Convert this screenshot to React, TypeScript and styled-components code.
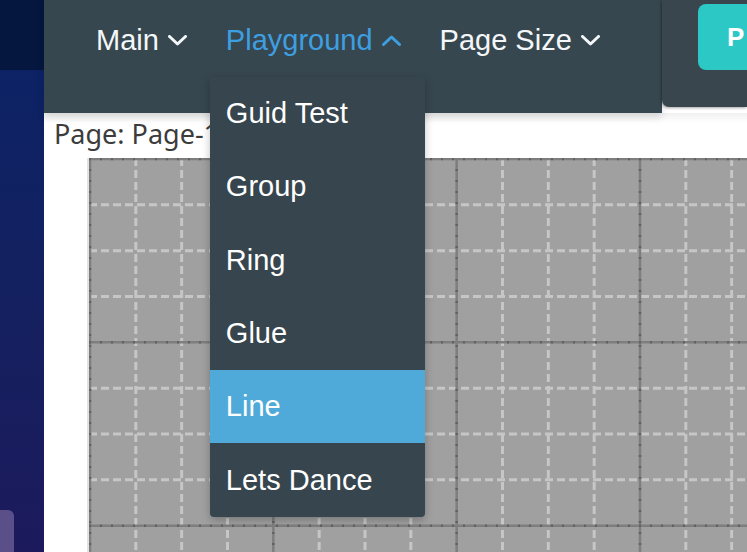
import React from "react";
import styled, { createGlobalStyle } from "styled-components";

const Global = createGlobalStyle`
  html, body { margin: 0; padding: 0; overflow: hidden; }
  body { width: 747px; height: 552px; background: #ffffff; font-family: "Liberation Sans", Arial, sans-serif; }
  #root { height: 100%; }
`;

const Shell = styled.div`
  display: flex;
  width: 747px;
  height: 552px;
  overflow: hidden;
`;

const Sidebar = styled.aside`
  flex: 0 0 44px;
  display: flex;
  flex-direction: column;
  background: linear-gradient(180deg, #0a2366 0%, #14205f 55%, #1c1a5d 100%);
`;

const SidebarTop = styled.div`
  height: 70px;
  background: #05163f;
`;

const SidebarSpacer = styled.div`
  flex: 1;
`;

const SidebarChip = styled.div`
  width: 14px;
  height: 42px;
  background: #5a4f88;
  border-top-right-radius: 6px;
`;

const Main = styled.div`
  flex: 1;
  display: flex;
  flex-direction: column;
  min-width: 0;
  position: relative;
`;

const Header = styled.header`
  display: flex;
  align-items: flex-start;
  height: 113px;
  background: #ffffff;
  position: relative;
  z-index: 2;
`;

const NavBar = styled.nav`
  flex: 0 0 618px;
  height: 113px;
  box-sizing: border-box;
  background: #37474f;
  display: flex;
  align-items: flex-start;
  padding-left: 32px;
  box-shadow: 0 4px 8px rgba(0, 0, 0, 0.12);
`;

const NavItem = styled.div<{ $active?: boolean }>`
  position: relative;
  display: flex;
  align-items: center;
  height: 80px;
  padding: 0 19px 0 20px;
  font-size: 29px;
  color: ${(p) => (p.$active ? "#3d9fe2" : "#f4f7f9")};
  white-space: nowrap;
  cursor: pointer;
`;

const Chevron = styled.svg`
  margin-left: 9px;
  width: 19px;
  height: 11px;
  flex: none;
`;

const ActionPanel = styled.div`
  flex: 1;
  height: 107px;
  background: #39464e;
  border-bottom-left-radius: 7px;
  box-shadow: -1px 1px 3px rgba(0, 0, 0, 0.35);
  display: flex;
  align-items: flex-start;
  padding-left: 36px;
  overflow: hidden;
`;

const TealButton = styled.button`
  margin-top: 4px;
  height: 66px;
  min-width: 120px;
  border: none;
  border-radius: 8px;
  background: #2cc8c6;
  color: #ffffff;
  font-family: "Liberation Sans", Arial, sans-serif;
  font-weight: 700;
  font-size: 26px;
  letter-spacing: 2px;
  text-align: left;
  padding: 0 0 0 29px;
`;

const Dropdown = styled.ul`
  position: absolute;
  top: 77px;
  left: 4px;
  width: 215px;
  margin: 0;
  padding: 0;
  list-style: none;
  background: #37464e;
  border-radius: 0 0 4px 4px;
  box-shadow: 0 3px 8px rgba(0, 0, 0, 0.25);
  overflow: hidden;
  z-index: 5;
`;

const DropItem = styled.li<{ $selected?: boolean }>`
  height: 73.3px;
  display: flex;
  align-items: center;
  padding-left: 16px;
  font-size: 29px;
  color: #ffffff;
  background: ${(p) => (p.$selected ? "#50aad9" : "transparent")};
`;

const Content = styled.section`
  flex: 1;
  background: linear-gradient(180deg, #f0f0f0 0px, #ffffff 10px, #ffffff 100%);
  display: flex;
  flex-direction: column;
  padding-top: 6px;
  min-height: 0;
`;

const PageLabel = styled.div`
  padding-left: 10px;
  height: 39px;
  font-family: "Noto Sans", "Open Sans", sans-serif;
  font-size: 27px;
  line-height: 30px;
  color: #3c3c3c;
  white-space: nowrap;
`;

const CanvasWrap = styled.div`
  flex: 1;
  margin-left: 43px;
  border-left: 2px solid #e2e2e2;
  overflow: hidden;
`;

const chevronDown = "M1.5 1.5 L9.5 9 L17.5 1.5";
const chevronUp = "M1.5 9.5 L9.5 2 L17.5 9.5";

function Caret({ up, color }: { up?: boolean; color: string }) {
  return (
    <Chevron viewBox="0 0 19 11">
      <path d={up ? chevronUp : chevronDown} fill="none" stroke={color} strokeWidth="3" strokeLinecap="round" strokeLinejoin="round" />
    </Chevron>
  );
}

function Grid() {
  const W = 680;
  const H = 420;
  const minor = 183.33 / 4;
  const minors: number[] = [];
  const majors: number[] = [];
  for (let i = 0; i * minor < W; i++) {
    (i % 4 === 0 ? majors : minors).push(1 + i * minor);
  }
  const minorsY: number[] = [];
  const majorsY: number[] = [];
  for (let i = 0; i * minor < H; i++) {
    (i % 4 === 0 ? majorsY : minorsY).push(1 + i * minor);
  }
  return (
    <svg width={W} height={H} style={{ display: "block" }}>
      <rect x="0" y="0" width={W} height={H} fill="#a0a0a0" />
      {minors.map((x) => (
        <line key={"vx" + x} x1={x} y1={0} x2={x} y2={H} stroke="#c6c6c6" strokeWidth="3" strokeDasharray="8 4" />
      ))}
      {minorsY.map((y) => (
        <line key={"hy" + y} x1={0} y1={y} x2={W} y2={y} stroke="#c6c6c6" strokeWidth="3" strokeDasharray="8 4" />
      ))}
      {majors.map((x) => (
        <g key={"mx" + x}>
          <line x1={x} y1={0} x2={x} y2={H} stroke="#7e7e7e" strokeWidth="2.5" />
          <line x1={x} y1={0} x2={x} y2={H} stroke="#626262" strokeWidth="2.5" strokeDasharray="2 9" />
        </g>
      ))}
      {majorsY.map((y) => (
        <g key={"my" + y}>
          <line x1={0} y1={y} x2={W} y2={y} stroke="#7e7e7e" strokeWidth="2.5" />
          <line x1={0} y1={y} x2={W} y2={y} stroke="#626262" strokeWidth="2.5" strokeDasharray="2 9" />
        </g>
      ))}
    </svg>
  );
}

const menuItems = ["Guid Test", "Group", "Ring", "Glue", "Line", "Lets Dance"];

export default function App() {
  return (
    <>
      <Global />
      <Shell>
        <Sidebar>
          <SidebarTop />
          <SidebarSpacer />
          <SidebarChip />
        </Sidebar>
        <Main>
          <Header>
            <NavBar>
              <NavItem>
                Main
                <Caret color="#f4f7f9" />
              </NavItem>
              <NavItem $active>
                Playground
                <Caret up color="#3d9fe2" />
                <Dropdown>
                  {menuItems.map((m) => (
                    <DropItem key={m} $selected={m === "Line"}>
                      {m}
                    </DropItem>
                  ))}
                </Dropdown>
              </NavItem>
              <NavItem>
                Page Size
                <Caret color="#f4f7f9" />
              </NavItem>
            </NavBar>
            <ActionPanel>
              <TealButton>Print</TealButton>
            </ActionPanel>
          </Header>
          <Content>
            <PageLabel>Page: Page-1</PageLabel>
            <CanvasWrap>
              <Grid />
            </CanvasWrap>
          </Content>
        </Main>
      </Shell>
    </>
  );
}
